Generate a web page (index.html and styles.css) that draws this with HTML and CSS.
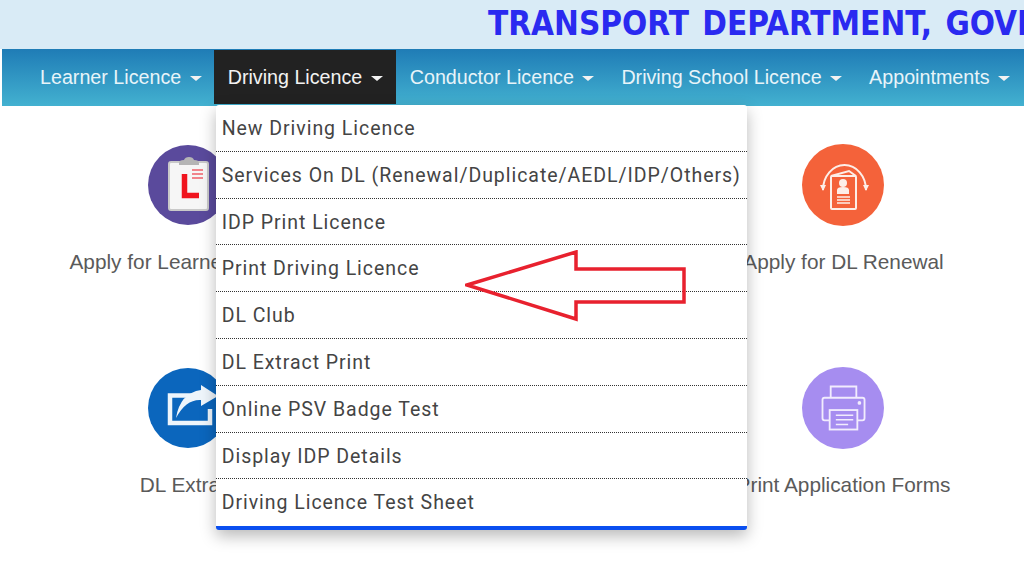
FILE: index.html
```html
<!DOCTYPE html>
<html>
<head>
<meta charset="utf-8" />
<title>Driving Licence</title>
<link rel="stylesheet" href="styles.css">
</head>
<body>
<div class="top">
  <h1 class="title">TRANSPORT DEPARTMENT, GOVERNMENT OF NCT OF DELHI</h1>
</div>
<ul class="nav">
  <li class="nav-item">Learner Licence <span class="caret"></span></li>
  <li class="nav-item active">Driving Licence <span class="caret"></span>
    <ul class="drop">
      <li>New Driving Licence</li>
      <li>Services On DL (Renewal/Duplicate/AEDL/IDP/Others)</li>
      <li>IDP Print Licence</li>
      <li>Print Driving Licence</li>
      <li>DL Club</li>
      <li>DL Extract Print</li>
      <li>Online PSV Badge Test</li>
      <li>Display IDP Details</li>
      <li>Driving Licence Test Sheet</li>
    </ul>
  </li>
  <li class="nav-item">Conductor Licence <span class="caret"></span></li>
  <li class="nav-item">Driving School Licence <span class="caret"></span></li>
  <li class="nav-item">Appointments <span class="caret"></span></li>
</ul>
<div class="services">
  <div class="card">
    <svg class="icon" viewBox="0 0 80 80">
      <circle cx="40" cy="40" r="40" fill="#5a4a9c"/>
      <rect x="21" y="17" width="39" height="48" rx="2" fill="#f6f6f6" stroke="#c9c9c9" stroke-width="2"/>
      <path d="M31 18q0-3 5-3 1-3 5-3t5 3q5 0 5 3v2H31z" fill="#b5b5b5"/>
      <path d="M36.500 29v21.500H51" fill="none" stroke="#f0141e" stroke-width="5.500"/>
      <path d="M44 25h11M44 29h11M44 33h11" stroke="#f0606a" stroke-width="1.500"/>
    </svg>
    <p>Apply for Learner Licence</p>
  </div>
  <div class="card right">
    <svg class="icon" viewBox="0 0 82 82">
      <circle cx="41" cy="41" r="41" fill="#f4623a"/>
      <g fill="none" stroke="#fdeee8" stroke-width="2">
        <path d="M21 46a21.500 25 0 0 1 43 0"/>
        <path d="M29 32l18-5 7 5"/>
        <rect x="29" y="32" width="25" height="33" rx="1" fill="#f4623a"/>
      </g>
      <path d="M18 41h6l-3 6zM61 41h6l-3 6z" fill="#fdeee8"/>
      <circle cx="41" cy="39" r="4" fill="#fdeee8"/>
      <path d="M35 50v-4q0-3 6-3t6 3v4z" fill="#fdeee8"/>
      <path d="M35 53h13M35 56h13M35 59h13" stroke="#fdeee8" stroke-width="1.500"/>
    </svg>
    <p>Apply for DL Renewal</p>
  </div>
  <div class="card">
    <svg class="icon" viewBox="0 0 80 80">
      <circle cx="40" cy="40" r="40" fill="#0b66bd"/>
      <path d="M47 27.500H22V55H62V41" fill="none" stroke="#eef5fb" stroke-width="4.500"/>
      <path d="M28 50Q32 25 53 22V17L70 28 53 38V32Q38 31 28 50Z" fill="#eef5fb"/>
    </svg>
    <p>DL Extract</p>
  </div>
  <div class="card right">
    <svg class="icon" viewBox="0 0 80 80">
      <circle cx="40" cy="40" r="40" fill="#a68df0"/>
      <g fill="none" stroke="#f1ecfd" stroke-width="1.800">
        <path d="M28 30V19H53V30"/>
        <path d="M27 52H22a2 2 0 0 1-2-2V32a2 2 0 0 1 2-2H59a2 2 0 0 1 2 2V50a2 2 0 0 1-2 2H54"/>
        <rect x="27" y="42" width="27" height="19"/>
      </g>
      <path d="M33 47h17M33 51.500h17M33 56h12" stroke="#f1ecfd" stroke-width="1.500"/>
      <circle cx="56" cy="35" r="1.800" fill="#f1ecfd"/>
    </svg>
    <p>Print Application Forms</p>
  </div>
</div>
<svg class="arrow" viewBox="0 0 222 74">
  <path d="M2 35L111 2V19H219V52H111V69Z" fill="none" stroke="#e8212e" stroke-width="3.500"/>
</svg>
</body>
</html>
```

FILE: styles.css
```css
*{margin:0;padding:0;box-sizing:border-box;}
html,body{height:100%;overflow:hidden;}
body{background:#fff;font-family:"Liberation Sans",Arial,sans-serif;position:relative;}
ul{list-style:none;}
.top{height:49px;background:#d9ebf6;padding:5px 0 0 488px;overflow:hidden;}
.title{font-family:"DejaVu Sans",sans-serif;font-stretch:condensed;font-size:33px;line-height:38px;font-weight:bold;word-spacing:3px;color:#2a2af0;white-space:nowrap;}
.nav{display:flex;height:57px;margin-left:2px;padding:1px 0 0 24px;background:linear-gradient(#1f7cb6,#43b1d0);}
.nav-item{position:relative;height:54px;padding:0 13px 0 14px;font-size:19.7px;line-height:54px;color:#e8f4f9;white-space:nowrap;}
.nav-item:first-child{padding-right:12px;}
.nav-item.active{background:#222;color:#f2f2f2;}
.caret{display:inline-block;width:0;height:0;margin-left:3px;vertical-align:middle;border-top:5px solid #f2f2f2;border-left:6px solid transparent;border-right:6px solid transparent;}
.drop{position:absolute;left:2px;top:55px;width:531px;background:#fff;border-bottom:4px solid #0a4ff0;border-radius:3px;box-shadow:0 6px 16px rgba(0,0,0,.28);z-index:2;}
.drop li{height:46.8px;padding-left:6px;font-family:Roboto,sans-serif;font-size:19.5px;line-height:47.5px;letter-spacing:.96px;color:#444;border-bottom:1px dotted #333;white-space:nowrap;}
.drop li:last-child{border-bottom:0;}
.services{display:grid;grid-template-columns:327px 327px;column-gap:327px;padding:39px 0 0 24px;}
.card{height:223px;text-align:center;white-space:nowrap;}
.icon{display:block;width:80px;height:80px;margin:0 auto;}
.right .icon{width:82px;height:82px;margin-top:-1px;margin-bottom:-1px;transform:translateX(1px);}
.card p{margin-top:24px;padding-left:1px;font-size:20.8px;line-height:26px;color:#5a5a5a;}
.right p{padding-left:4px;}
.arrow{position:absolute;left:465px;top:250px;width:222px;height:74px;z-index:3;}
```
